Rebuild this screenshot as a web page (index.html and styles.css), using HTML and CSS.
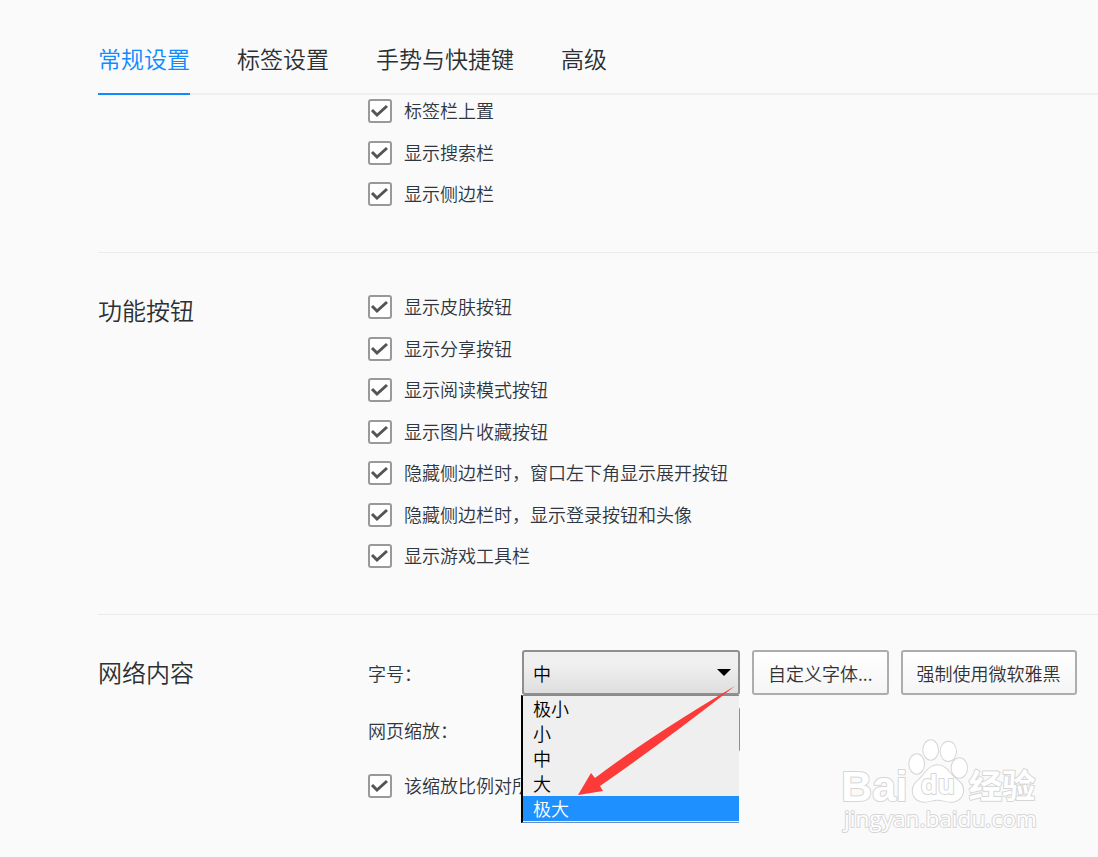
FILE: index.html
```html
<!doctype html>
<html lang="zh-CN">
  <head>
    <meta charset="UTF-8" />
    <meta name="viewport" content="width=device-width, initial-scale=1.0" />
    <title>常规设置</title>
    <link rel="stylesheet" href="styles.css">
  </head>
  <body>
    <!-- Tabs -->
    <nav class="tabs">
      <a href="#general" class="tab active">常规设置</a>
      <a href="#tabs" class="tab">标签设置</a>
      <a href="#gestures" class="tab">手势与快捷键</a>
      <a href="#advanced" class="tab">高级</a>
    </nav>

    <main class="settings">
      <section class="group group-first">
        <ul class="options">
          <li><label class="check"><input type="checkbox" checked>标签栏上置</label></li>
          <li><label class="check"><input type="checkbox" checked>显示搜索栏</label></li>
          <li><label class="check"><input type="checkbox" checked>显示侧边栏</label></li>
        </ul>
      </section>

      <section class="group">
        <h2>功能按钮</h2>
        <ul class="options">
          <li><label class="check"><input type="checkbox" checked>显示皮肤按钮</label></li>
          <li><label class="check"><input type="checkbox" checked>显示分享按钮</label></li>
          <li><label class="check"><input type="checkbox" checked>显示阅读模式按钮</label></li>
          <li><label class="check"><input type="checkbox" checked>显示图片收藏按钮</label></li>
          <li><label class="check"><input type="checkbox" checked>隐藏侧边栏时，窗口左下角显示展开按钮</label></li>
          <li><label class="check"><input type="checkbox" checked>隐藏侧边栏时，显示登录按钮和头像</label></li>
          <li><label class="check"><input type="checkbox" checked>显示游戏工具栏</label></li>
        </ul>
      </section>

      <section class="group group-web">
        <h2>网络内容</h2>
        <div class="fields">
          <div class="field">
            <label for="font-size">字号：</label>
            <div class="dropdown">
              <select id="font-size">
                <option>极小</option>
                <option>小</option>
                <option selected>中</option>
                <option>大</option>
                <option>极大</option>
              </select>
              <ul class="menu" role="listbox" aria-label="字号">
                <li role="option">极小</li>
                <li role="option">小</li>
                <li role="option">中</li>
                <li role="option">大</li>
                <li role="option" class="selected" aria-selected="true">极大</li>
              </ul>
              <svg class="pointer" viewBox="0 -1 218 150" aria-hidden="true">
                <path d="M213 35Q130 84 73 127L69 122L56 144L81 140L78 135Q140 92 213 35Z" fill="#fc3a38"/>
              </svg>
            </div>
            <button type="button">自定义字体...</button>
            <button type="button">强制使用微软雅黑</button>
          </div>
          <div class="field">
            <label for="page-zoom">网页缩放：</label>
            <div class="dropdown">
              <select id="page-zoom"></select>
            </div>
          </div>
          <label class="check"><input type="checkbox" checked>该缩放比例对所</label>
        </div>
      </section>
    </main>

    <!-- Watermark -->
    <svg class="watermark" viewBox="0 0 660 330" aria-hidden="true">
      <g class="mark">
        <ellipse cx="260" cy="102" rx="22" ry="29"/>
        <ellipse cx="302" cy="60" rx="22" ry="29"/>
        <ellipse cx="355" cy="64" rx="23" ry="29"/>
        <ellipse cx="388" cy="114" rx="23" ry="29"/>
        <path d="M323 106C350 106 358 134 384 152C410 172 402 212 366 215C346 216 338 209 323 209C308 209 300 216 280 215C244 211 240 174 262 154C286 134 294 106 323 106Z"/>
        <text x="34" y="212" class="brand">Bai</text>
        <text x="272" y="193" class="du">du</text>
        <text x="416" y="204" class="cjk">经验</text>
        <text x="42" y="291" class="url">jingyan.baidu.com</text>
      </g>
    </svg>
  </body>
</html>
```

FILE: styles.css
```css
* {
  box-sizing: border-box;
}

body {
  position: relative;
  min-height: 100vh;
  margin: 0;
  background: #fafafa;
  color: #2f3640;
  font-family: "Noto Sans CJK SC", sans-serif;
  font-size: 18px;
  font-weight: 350;
  line-height: 24px;
}

ul {
  margin: 0;
  padding: 0;
  list-style: none;
}

/* Tabs */
.tabs {
  display: flex;
  gap: 47px;
  margin-left: 98px;
  padding-top: 27px;
  box-shadow: inset 0 -2px #f0f0f0;
}

.tab {
  height: 68px;
  border-bottom: 2px solid transparent;
  color: #2b3033;
  font-size: 23px;
  line-height: 63px;
  text-decoration: none;
  white-space: nowrap;
}

.tab.active {
  border-color: #0d8bff;
  color: #0d8bff;
}

/* Setting groups */
.settings {
  margin-left: 98px;
}

.group {
  display: grid;
  grid-template-columns: 270px 1fr;
  padding: 42px 0 46px;
  border-top: 1px solid #ebebeb;
}

.group-first {
  padding-top: 4px;
  border-top: none;
}

.group h2 {
  margin: 0;
  color: #2b3033;
  font-size: 24px;
  font-weight: inherit;
  line-height: 30px;
}

.options,
.fields {
  grid-column: 2;
}

.options li + li {
  margin-top: 17px;
}

.options li:nth-child(even) {
  margin-top: 18px;
}

.check {
  display: flex;
  align-items: flex-start;
  gap: 12px;
  line-height: 22px;
  white-space: nowrap;
}

.check input {
  appearance: none;
  flex: none;
  width: 24px;
  height: 24px;
  margin: 0;
  border: 2px solid #999;
  border-radius: 3px;
  background: #fff;
}

.check input:checked {
  background: #fff url("data:image/svg+xml,%3Csvg xmlns='http://www.w3.org/2000/svg' viewBox='0 0 20 20'%3E%3Cpath d='M2 9l5 5L17 5' fill='none' stroke='%23555' stroke-width='3'/%3E%3C/svg%3E") center / 20px 20px no-repeat;
}

/* Web content */
.group-web {
  padding: 35px 0 0;
}

.group-web h2 {
  line-height: 44px;
}

.field {
  display: flex;
  align-items: center;
  gap: 12px;
  margin-bottom: 12px;
}

.field label {
  width: 142px;
}

.fields .check {
  margin-top: 22px;
}

.dropdown {
  position: relative;
  width: 218px;
}

.dropdown select {
  appearance: none;
  display: block;
  width: 100%;
  height: 45px;
  padding: 0 9px;
  border: 2px solid #8f8f8f;
  border-radius: 3px;
  background: linear-gradient(#f0f0f0 30%, #dedede);
  color: #000;
  font: inherit;
}

.dropdown::after {
  content: "";
  position: absolute;
  top: 19px;
  right: 9px;
  border: 7px solid transparent;
  border-top-color: #000;
  border-bottom: none;
}

button {
  height: 45px;
  padding: 0 14px;
  border: 2px solid #adadad;
  border-radius: 3px;
  background: linear-gradient(#fff, #f5f5f5);
  color: #333;
  font: inherit;
  white-space: nowrap;
}

.menu {
  position: absolute;
  top: 45px;
  left: -1px;
  z-index: 1;
  width: 218px;
  padding-bottom: 1px;
  border: 1px solid #6c8cc4;
  border-right: none;
  border-left: 2px solid #000;
  background: #efefef;
  color: #000;
  line-height: 25px;
}

.menu li {
  padding-left: 10px;
}

.menu .selected {
  background: #1e90ff;
  color: #fff;
}

.pointer {
  position: absolute;
  top: 0;
  left: 0;
  z-index: 2;
  width: 218px;
  height: 150px;
}

/* Watermark */
.watermark {
  position: absolute;
  right: 48px;
  bottom: 17px;
  width: 220px;
  height: 110px;
}

.mark {
  fill: #fff;
  stroke: #d6d6d6;
  stroke-width: 6px;
  stroke-linejoin: round;
  paint-order: stroke;
}

.brand {
  font: bold 128px "Liberation Sans", sans-serif;
}

.du {
  font: bold 80px "Open Sans", sans-serif;
}

.cjk {
  font: bold 100px "Noto Sans CJK SC", sans-serif;
}

.url {
  font: 68px "Open Sans", sans-serif;
}
```
